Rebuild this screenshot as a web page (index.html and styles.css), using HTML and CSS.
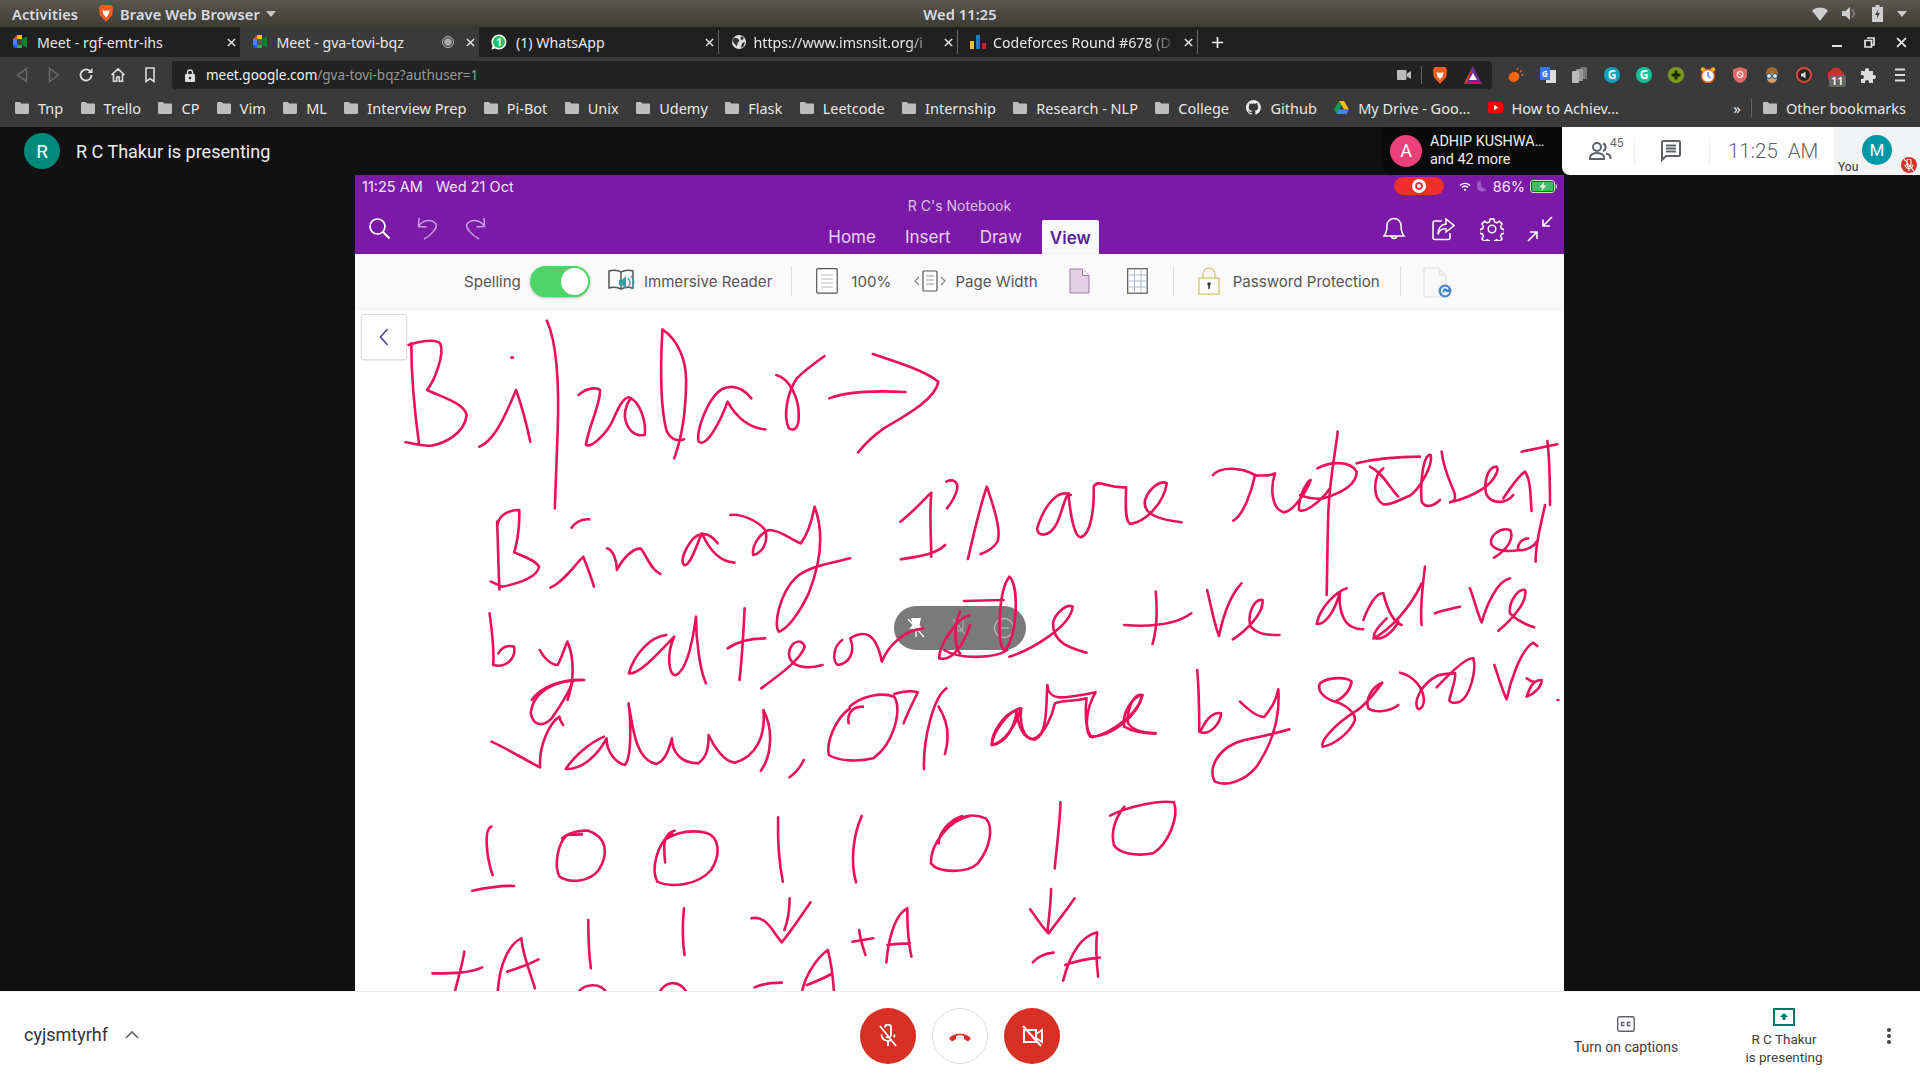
FILE: index.html
```html
<!DOCTYPE html>
<html lang="en">
<head>
<meta charset="utf-8">
<title>Meet - gva-tovi-bqz</title>
<link rel="stylesheet" href="styles.css">
</head>
<body>
<svg class="defs" width="0" height="0" aria-hidden="true">
  <symbol id="folder" viewBox="0 0 14 12"><path d="M0 1.2C0 .5.5 0 1.2 0h3.600l1.500 1.600h6.500c.7 0 1.200.5 1.200 1.200v8c0 .7-.5 1.200-1.200 1.200H1.200C.5 12 0 11.500 0 10.800z" fill="#bdbdbd"/></symbol>
  <symbol id="meet" viewBox="0 0 16 16"><path d="M1 5l4-4h5v4H5v1z" fill="#ea4335"/><path d="M1 5h4v6H1z" fill="#4285f4"/><path d="M1 11h4v3H3a2 2 0 0 1-2-2z" fill="#1967d2"/><path d="M5 11h5v3H5z" fill="#34a853"/><path d="M5 1h5v4H5z" fill="#fbbc04"/><path d="M10 5v6l5 3V2z" fill="#00832d"/><path d="M5 5h5v6H5z" fill="#fff" opacity=".15"/></symbol>
  <symbol id="x" viewBox="0 0 10 10"><path d="M1 1l8 8M9 1l-8 8" stroke="#e6e6e6" stroke-width="1.600" fill="none"/></symbol>
</svg>

<header class="panel">
  <div class="panel-left">
    <span>Activities</span>
    <span class="app">
      <svg width="16" height="19" viewBox="0 0 16 19"><path d="M3 1h10l2 2.500-.6 7.500-6.400 7-6.400-7L1 3.500z" fill="#f15a22"/><path d="M4.500 6l2 1 1.500-.6L9.500 7l2-1-.8 4L8 13.500 5.300 10z" fill="#fff"/></svg>
      Brave Web Browser
      <i class="caret"></i>
    </span>
  </div>
  <div class="panel-clock">Wed 11:25</div>
  <div class="panel-right">
    <svg width="16" height="14" viewBox="0 0 16 14"><path d="M0 3.500C4.500-.6 11.500-.6 16 3.500L8 14z" fill="#cfcfcf"/></svg>
    <svg width="16" height="15" viewBox="0 0 16 15"><path d="M0 5h3.500L8 1v13L3.500 10H0z" fill="#cfcfcf"/><path d="M10 3.500a5 5 0 0 1 0 8" stroke="#888" stroke-width="1.500" fill="none"/></svg>
    <svg width="11" height="17" viewBox="0 0 11 17"><path d="M3.500 0h4v2H11v15H0V2h3.500z" fill="#cfcfcf"/><path d="M6.500 4L3 10h2.500L4.500 14 8 8H5.500z" fill="#3c3a35"/></svg>
    <i class="caret"></i>
  </div>
</header>

<nav class="tabs">
  <div class="tab"><svg class="fav"><use href="#meet"/></svg><span class="tab-title">Meet - rgf-emtr-ihs</span><svg class="tab-x"><use href="#x"/></svg></div>
  <div class="tab active"><svg class="fav"><use href="#meet"/></svg><span class="tab-title">Meet - gva-tovi-bqz</span>
    <svg class="rec" viewBox="0 0 12 12"><circle cx="6" cy="6" r="5.500" fill="none" stroke="#bbb"/><circle cx="6" cy="6" r="3.800" fill="#aaa"/></svg>
    <svg class="tab-x"><use href="#x"/></svg></div>
  <div class="tab sep"><svg class="fav" viewBox="0 0 16 16"><path d="M8 .5a7.500 7.500 0 0 1 0 15c-1.300 0-2.600-.3-3.700-1L.5 15.500l1-3.700A7.500 7.500 0 0 1 8 .5z" fill="#fff"/><circle cx="8" cy="8" r="6" fill="#1fc25b"/><text x="8" y="11.500" class="wa">1</text></svg><span class="tab-title">(1) WhatsApp</span><svg class="tab-x"><use href="#x"/></svg></div>
  <div class="tab sep"><svg class="fav tight" viewBox="0 0 16 16"><circle cx="8" cy="8" r="7" fill="#e0e0e0"/><path d="M3 3.500l4 1 1.500 2.500-2 2-.5 3.500L3.500 10 1.500 7zM10 2l3 2-2 2.500-1.500-1.500zM11 9l3-1-1.500 4.500L10 14z" fill="#333"/></svg><span class="tab-title fade">https://www.imsnsit.org/i</span><svg class="tab-x"><use href="#x"/></svg></div>
  <div class="tab sep"><svg class="fav tight" viewBox="0 0 16 16"><rect x="0" y="7" width="4" height="8" fill="#f6c02c"/><rect x="6" y="1" width="4" height="14" fill="#1a7cc1"/><rect x="12" y="9" width="4" height="6" fill="#c0232c"/></svg><span class="tab-title fade">Codeforces Round #678 (D</span><svg class="tab-x"><use href="#x"/></svg></div>
  <svg class="newtab" viewBox="0 0 14 14"><path d="M7 1v12M1 7h12" stroke="#eee" stroke-width="1.800"/></svg>
  <div class="win">
    <svg width="11" height="11" viewBox="0 0 11 11"><path d="M0 9h10" stroke="#e6e6e6" stroke-width="2"/></svg>
    <svg width="11" height="11" viewBox="0 0 11 11"><path d="M3 1h7v7H8M1 3.500h6.500V10H1z" fill="none" stroke="#e6e6e6" stroke-width="1.700"/></svg>
    <svg width="11" height="11"><use href="#x"/></svg>
  </div>
</nav>

<div class="toolbar">
  <div class="nav-btns">
    <svg viewBox="0 0 16 16"><path d="M12.500 1.500v13L3.500 8z" fill="none" stroke="#6b6b6b" stroke-width="1.500"/></svg>
    <svg viewBox="0 0 16 16"><path d="M3.500 1.500v13l9-6.500z" fill="none" stroke="#6b6b6b" stroke-width="1.500"/></svg>
    <svg viewBox="0 0 16 16"><path d="M13.500 8a5.500 5.500 0 1 1-1.700-4" fill="none" stroke="#ddd" stroke-width="1.800"/><path d="M14.500 1v5h-5z" fill="#ddd"/></svg>
    <svg viewBox="0 0 16 16"><path d="M1.500 8L8 1.800 14.500 8M3.500 7v7.200h3.200V10h2.600v4.200h3.200V7" fill="none" stroke="#ddd" stroke-width="1.600"/></svg>
    <svg viewBox="0 0 16 16"><path d="M4 1h8v13.500l-4-2.800-4 2.800z" fill="none" stroke="#ddd" stroke-width="1.600"/></svg>
  </div>
  <div class="omnibox">
    <svg width="10" height="13" viewBox="0 0 10 13"><path d="M2.500 5V3.500a2.500 2.500 0 0 1 5 0V5" fill="none" stroke="#ddd" stroke-width="1.300"/><rect y="5" width="10" height="8" rx="1" fill="#ddd"/><circle cx="5" cy="9" r="1.200" fill="#222"/></svg>
    <span class="url"><b>meet.google.com</b>/gva-tovi-bqz?authuser=1</span>
    <svg class="cam" width="14" height="10" viewBox="0 0 14 10"><rect width="9.500" height="10" rx="1" fill="#bbb"/><path d="M10 3.500L14 1v8l-4-2.500z" fill="#bbb"/></svg>
    <i class="omni-sep"></i>
    <svg width="16" height="19" viewBox="0 0 16 19"><path d="M3 1h10l2 2.500-.6 7.500-6.400 7-6.400-7L1 3.500z" fill="#f15a22"/><path d="M4.500 6l2 1 1.500-.6L9.500 7l2-1-.8 4L8 13.500 5.300 10z" fill="#fff"/></svg>
    <svg class="bat-tri" width="18" height="18" viewBox="0 0 18 18"><path d="M9 0l9 18H0z" fill="#662d91"/><path d="M9 0L0 18l3-2z" fill="#ff5000"/><path d="M18 18H0l3-2h12z" fill="#e0115f"/><path d="M9 7l4 7H5z" fill="#fff"/></svg>
  </div>
  <div class="exts">
    <svg viewBox="0 0 16 16"><ellipse cx="6" cy="10" rx="5.500" ry="5" fill="#f0640a" transform="rotate(-30 6 10)"/><path d="M9 3l1-2M12 5l2-2M13 8h2.500" stroke="#f0640a" stroke-width="1.400"/></svg>
    <svg viewBox="0 0 16 16"><rect x="6" y="3" width="10" height="13" fill="#ddd"/><rect width="10" height="13" fill="#3b78e7"/><text x="5" y="10" class="ex">G</text></svg>
    <svg viewBox="0 0 16 16"><rect x="8" y="0" width="7" height="12" rx="1" fill="#777"/><rect x="4" y="2" width="7" height="12" rx="1" fill="#999"/><rect x="0" y="4" width="7" height="12" rx="1" fill="#bbb"/></svg>
    <svg viewBox="0 0 16 16"><circle cx="8" cy="8" r="8" fill="#11a3b8"/><text x="8" y="12" class="exl">G</text></svg>
    <svg viewBox="0 0 16 16"><circle cx="8" cy="8" r="8" fill="#15c39a"/><text x="8" y="12" class="exl">G</text></svg>
    <svg viewBox="0 0 16 16"><circle cx="8" cy="8" r="8" fill="#7a9a20"/><path d="M8 3.500v9M3.500 8h9" stroke="#1f2a0a" stroke-width="3"/></svg>
    <svg viewBox="0 0 16 16"><circle cx="8" cy="9" r="6.500" fill="#fff" stroke="#ef5a28" stroke-width="1.500"/><path d="M8 5v4l2.500 2" stroke="#3b78e7" stroke-width="1.300" fill="none"/><circle cx="3" cy="2.500" r="2.200" fill="#f6b01a"/><circle cx="13" cy="2.500" r="2.200" fill="#f6b01a"/></svg>
    <svg viewBox="0 0 16 16"><path d="M8 0l7 2.500V8c0 4-3.500 7-7 8-3.500-1-7-4-7-8V2.500z" fill="#e46a6a"/><circle cx="8" cy="7.500" r="3" fill="none" stroke="#fff"/><path d="M6 5.500l4 4" stroke="#fff"/></svg>
    <svg viewBox="0 0 16 16"><circle cx="8" cy="6" r="6" fill="#a06a35"/><circle cx="8" cy="11" r="5" fill="#d9a066"/><circle cx="5" cy="9" r="2.500" fill="#cfe8ff" stroke="#246" /><circle cx="11" cy="9" r="2.500" fill="#cfe8ff" stroke="#246"/></svg>
    <svg viewBox="0 0 16 16"><circle cx="8" cy="8" r="7" fill="#222" stroke="#d9473b" stroke-width="2"/><path d="M5 6.500h2L9.500 4.500v7L7 9.500H5z" fill="#ddd"/></svg>
    <span class="abp"><svg viewBox="0 0 16 16"><path d="M5 0h6l5 5v6l-5 5H5l-5-5V5z" fill="#c9302c"/></svg><b>11</b></span>
    <svg viewBox="0 0 16 16"><path d="M1 4h4V3a2 2 0 0 1 4 0v1h4v4h1a2 2 0 0 1 0 4h-1v4H9v-1a2 2 0 0 0-4 0v1H1v-4h1a2 2 0 0 0 0-4H1z" fill="#ddd"/></svg>
    <svg viewBox="0 0 16 16"><path d="M3 2.500h10M3 8h10M3 13.500h10" stroke="#ddd" stroke-width="2"/></svg>
  </div>
</div>

<div class="bookmarks">
  <a><svg class="bf"><use href="#folder"/></svg>Tnp</a>
  <a><svg class="bf"><use href="#folder"/></svg>Trello</a>
  <a><svg class="bf"><use href="#folder"/></svg>CP</a>
  <a><svg class="bf"><use href="#folder"/></svg>Vim</a>
  <a><svg class="bf"><use href="#folder"/></svg>ML</a>
  <a><svg class="bf"><use href="#folder"/></svg>Interview Prep</a>
  <a><svg class="bf"><use href="#folder"/></svg>Pi-Bot</a>
  <a><svg class="bf"><use href="#folder"/></svg>Unix</a>
  <a><svg class="bf"><use href="#folder"/></svg>Udemy</a>
  <a><svg class="bf"><use href="#folder"/></svg>Flask</a>
  <a><svg class="bf"><use href="#folder"/></svg>Leetcode</a>
  <a><svg class="bf"><use href="#folder"/></svg>Internship</a>
  <a><svg class="bf"><use href="#folder"/></svg>Research - NLP</a>
  <a><svg class="bf"><use href="#folder"/></svg>College</a>
  <a><svg class="bi" viewBox="0 0 16 16"><path d="M8 0a8 8 0 0 0-2.500 15.600c.4.100.5-.2.500-.4v-1.400c-2.200.5-2.700-1-2.700-1-.4-.9-.9-1.200-.9-1.200-.7-.5.100-.5.100-.5.800.1 1.200.8 1.200.8.700 1.200 1.900.9 2.300.7.100-.5.300-.9.500-1.100-1.800-.2-3.600-.9-3.600-4 0-.9.300-1.600.8-2.100-.1-.2-.4-1 .1-2.100 0 0 .7-.2 2.200.8a7.600 7.600 0 0 1 4 0c1.500-1 2.200-.8 2.200-.8.400 1.100.2 1.900.1 2.100.5.600.8 1.300.8 2.100 0 3.100-1.900 3.700-3.700 3.900.3.300.6.800.6 1.500v2.200c0 .2.100.5.600.4A8 8 0 0 0 8 0z" fill="#eee"/></svg>Github</a>
  <a><svg class="bi" viewBox="0 0 16 14"><path d="M5.300 0h5.400L16 9h-5.300z" fill="#fbbc04"/><path d="M5.300 0L0 9l2.700 5 5.300-9z" fill="#0f9d58"/><path d="M2.700 14h10.600L16 9H5.300z" fill="#4285f4"/></svg>My Drive - Goo…</a>
  <a><svg class="bi" viewBox="0 0 16 14"><rect y="1" width="16" height="12" rx="3" fill="#f00"/><path d="M6.300 4.200v5.600L11 7z" fill="#fff"/></svg>How to Achiev…</a>
  <span class="bm-end">
    <span class="more">»</span><i class="bm-sep"></i>
    <a><svg class="bf"><use href="#folder"/></svg>Other bookmarks</a>
  </span>
</div>

<main class="meet">
  <div class="meet-top">
    <div class="presenter"><span class="avatar teal">R</span><span>R C Thakur is presenting</span></div>
    <div class="meet-right">
      <div class="chip"><span class="avatar pink">A</span><div class="chip-text"><div>ADHIP KUSHWA…</div><div>and 42 more</div></div></div>
      <div class="info">
        <div class="people"><svg width="24" height="20" viewBox="0 0 24 20"><circle cx="9" cy="6" r="4" fill="none" stroke="#5f6368" stroke-width="2"/><path d="M2 18v-1.500c0-3 4-4.500 7-4.500s7 1.500 7 4.500V18z" fill="none" stroke="#5f6368" stroke-width="2"/><path d="M15 2.500a4 4 0 0 1 0 7.500M18 12.500c2.500.7 4.500 2 4.500 4V18" fill="none" stroke="#5f6368" stroke-width="2"/></svg><sup>45</sup></div>
        <i class="info-sep"></i>
        <svg class="chat" width="20" height="22" viewBox="0 0 20 22"><path d="M2 1h16a1 1 0 0 1 1 1v13a1 1 0 0 1-1 1H5l-4 4V2a1 1 0 0 1 1-1z" fill="none" stroke="#5f6368" stroke-width="2"/><path d="M5 5.500h10M5 8.500h10M5 11.500h10" stroke="#5f6368" stroke-width="1.800"/></svg>
        <i class="info-sep"></i>
        <span class="clock">11:25 &nbsp;AM</span>
      </div>
      <div class="you">
        <span class="you-label">You</span>
        <span class="avatar cyan">M</span>
        <span class="mic-dot"><svg width="10" height="12" viewBox="0 0 10 12"><path d="M3 2a2 2 0 0 1 4 0v4a2 2 0 0 1-4 0zM1 5.500a4 4 0 0 0 8 0M5 9.500V12M0 0l10 12" fill="none" stroke="#fff" stroke-width="1.100"/></svg></span>
      </div>
    </div>
  </div>

  <div class="meet-mid">
    <section class="stage">
      <div class="purple">
        <div class="status">
          <div class="status-l"><span>11:25 AM</span><span>Wed 21 Oct</span></div>
          <div class="status-r">
            <span class="recpill"><span class="recdot"></span></span>
            <svg width="12" height="9" viewBox="0 0 12 9"><path d="M1 3.500a7 7 0 0 1 10 0M3 5.500a4.200 4.200 0 0 1 6 0" fill="none" stroke="#fff" stroke-width="1.300"/><circle cx="6" cy="7.800" r="1.100" fill="#fff"/></svg>
            <svg width="10" height="12" viewBox="0 0 10 12"><path d="M4 .5a5.500 5.500 0 1 0 5.500 8.500C6 9.500 3 6 4 .5z" fill="#9b5cc4"/></svg>
            <span>86%</span>
            <svg class="batt" width="28" height="13" viewBox="0 0 28 13"><rect x=".5" y=".5" width="24" height="12" rx="2.500" fill="none" stroke="#cfe3c6"/><rect x="2" y="2" width="21" height="9" rx="1" fill="#3bc45e"/><path d="M14 1.500L9.500 7.500h3L11 11.500 16.500 5.500h-3z" fill="#f4f4e0"/><rect x="25.500" y="4.500" width="1.500" height="4" fill="#cfb8dc"/></svg>
          </div>
        </div>
        <div class="ribbon">
          <div class="ribbon-l">
            <svg width="24" height="24" viewBox="0 0 24 24"><circle cx="10.500" cy="10.500" r="7.500" fill="none" stroke="#fff" stroke-width="1.700"/><path d="M16 16l6.500 6.500" stroke="#fff" stroke-width="1.900"/></svg>
            <svg width="24" height="24" viewBox="0 0 24 24"><path d="M3 2l-.5 8.500 8 .5M3 9.500C8 3 16 3 20 8c2 4-6 12-12 15" fill="none" stroke="#c9a3dd" stroke-width="1.500"/></svg>
            <svg class="redo" width="24" height="24" viewBox="0 0 24 24"><path d="M21 2l.5 8.500-8 .5M21 9.500C16 3 8 3 4 8c-2 4 6 12 12 15" fill="none" stroke="#c9a3dd" stroke-width="1.500"/></svg>
          </div>
          <div class="ribbon-c">
            <div class="nb-title">R C's Notebook</div>
            <div class="rtabs"><span>Home</span><span>Insert</span><span>Draw</span><span class="rtab-on">View</span></div>
          </div>
          <div class="ribbon-r">
            <svg width="24" height="24" viewBox="0 0 24 24"><path d="M12 1.500a7 7 0 0 1 7 7c0 6 1 8 3 10.500H2c2-2.500 3-4.500 3-10.500a7 7 0 0 1 7-7zM9.500 19a2.500 2.500 0 0 0 5 0" fill="none" stroke="#fff" stroke-width="1.500"/></svg>
            <svg width="24" height="24" viewBox="0 0 24 24"><path d="M19 16v4.500a2 2 0 0 1-2 2H4a2 2 0 0 1-2-2V6a2 2 0 0 1 2-2h7" fill="none" stroke="#fff" stroke-width="1.500"/><path d="M15 2l8 6.500-8 6.500v-3.500c-5 0-7 2-8 6 0-6 3-10 8-10.500z" fill="none" stroke="#fff" stroke-width="1.500"/></svg>
            <svg width="24" height="24" viewBox="0 0 24 24"><circle cx="12" cy="12" r="3.800" fill="none" stroke="#fff" stroke-width="1.500"/><path d="M10 1.500h4l.7 3 2.400 1 2.700-1.600 2.800 2.800-1.600 2.700 1 2.400 3 .7v4l-3 .7-1 2.400 1.600 2.700-2.800 2.800-2.700-1.600-2.400 1-.7 3h-4l-.7-3-2.400-1-2.700 1.600-2.800-2.800 1.600-2.700-1-2.400-3-.7v-4l3-.7 1-2.400-1.600-2.700 2.800-2.800 2.700 1.600 2.400-1z" transform="translate(.6 .6) scale(.95)" fill="none" stroke="#fff" stroke-width="1.600"/></svg>
            <svg class="collapse" width="26" height="26" viewBox="0 0 26 26"><path d="M25 1l-9 9M16 3.500V10h7M1 25l9-9M10 23v-7H3" fill="none" stroke="#fff" stroke-width="1.600"/></svg>
          </div>
        </div>
      </div>

      <div class="tools">
        <span class="t-label t-spell">Spelling</span>
        <span class="toggle"><span class="knob"></span></span>
        <svg class="t-reader" width="27" height="24" viewBox="0 0 27 24"><path d="M13 3C10 1 5 1 1 2v17c4-1 8-1 12 1 4-2 8-2 12-1V2c-4-1-8-1-12 1zM13 3v17" fill="none" stroke="#555" stroke-width="1.500"/><path d="M11 11h3l4-4v13l-4-4h-3z" fill="#2aa59d"/><path d="M20 9a6 6 0 0 1 0 9M23 7a9 9 0 0 1 0 13" fill="none" stroke="#2aa59d" stroke-width="1.400"/></svg>
        <span class="t-label t-imm">Immersive Reader</span>
        <i class="t-sep s1"></i>
        <svg class="t-page" width="22" height="26" viewBox="0 0 22 26"><rect x=".7" y=".7" width="20.500" height="24.500" rx="1" fill="#fff" stroke="#555" stroke-width="1.200"/><path d="M5 7h12M5 11h12M5 15h12M5 19h12" stroke="#bbb" stroke-width="1.200"/></svg>
        <span class="t-label t-100">100%</span>
        <span class="t-pw"><svg width="32" height="22" viewBox="0 0 32 22"><path d="M5 7l-4 4 4 4M27 7l4 4-4 4" fill="none" stroke="#888" stroke-width="1.200"/><rect x="9" y="1" width="14" height="20" rx="1" fill="#fff" stroke="#555" stroke-width="1.200"/><path d="M12 6h8M12 10h8M12 14h8" stroke="#999" stroke-width="1.200"/></svg></span>
        <span class="t-label t-pwl">Page Width</span>
        <svg class="t-pink" width="21" height="26" viewBox="0 0 21 26"><path d="M1 1h12.500L20 7.500V25H1z" fill="#e4cfe6" stroke="#9a7fa5" stroke-width="1"/><path d="M13.500 1v6.500H20" fill="#fff" stroke="#9a7fa5"/></svg>
        <svg class="t-grid" width="21" height="26" viewBox="0 0 21 26"><rect x=".7" y=".7" width="19.500" height="24.500" fill="#fff" stroke="#555" stroke-width="1.200"/><path d="M1 7h19M1 13h19M1 19h19M7.500 1v24M14 1v24" stroke="#a8b8d0" stroke-width="1"/></svg>
        <i class="t-sep s2"></i>
        <svg class="t-lock" width="22" height="28" viewBox="0 0 22 28"><path d="M5 11V7a6 6 0 0 1 12 0v4" fill="none" stroke="#d8cc7a" stroke-width="1.500"/><rect x="1" y="11" width="20" height="16" fill="#fff" stroke="#d8cc7a" stroke-width="1.500"/><circle cx="11" cy="17" r="1.800" fill="#333"/><path d="M11 18v4" stroke="#333" stroke-width="1.500"/></svg>
        <span class="t-label t-pass">Password Protection</span>
        <i class="t-sep s3"></i>
        <svg class="t-file" width="29" height="32" viewBox="0 0 29 32"><path d="M1 1h15l7 7v22H1z" fill="#fafafa" stroke="#ddd"/><path d="M16 1v7h7" fill="#eee" stroke="#ddd"/><circle cx="22" cy="24" r="6.500" fill="#4a86c5"/><path d="M25 22a3.500 3.500 0 1 0 0 4h-3v-2" fill="none" stroke="#fff" stroke-width="1.500"/></svg>
      </div>

      <div class="canvas">
        <button class="back" type="button" aria-label="Back"><svg width="10" height="18" viewBox="0 0 10 18"><path d="M8.500 1L1.500 9l7 8" fill="none" stroke="#4a3aa0" stroke-width="1.500"/></svg></button>

        <div class="pill">
          <svg width="20" height="22" viewBox="0 0 20 22"><path d="M5 1h10l-1.500 7 3 4H3.500l3-4z" fill="#fff"/><path d="M10 12v8M2 2l16 18" stroke="#fff" stroke-width="1.300"/></svg>
          <svg width="18" height="22" viewBox="0 0 18 22"><rect x="6" y="2" width="6" height="12" rx="3" fill="none" stroke="#a8a8a8" stroke-width="1.300"/><path d="M2 2l14 18" stroke="#a8a8a8" stroke-width="1.300"/></svg>
          <svg width="22" height="22" viewBox="0 0 22 22"><circle cx="11" cy="11" r="9.500" fill="none" stroke="#b4b4b4" stroke-width="1.300"/><path d="M6 11h10" stroke="#b4b4b4" stroke-width="1.300"/></svg>
        </div>

        <svg class="ink" viewBox="355 308 1209 684" preserveAspectRatio="none" role="img" aria-label="Handwritten notes on bipolar encoding">
          <g transform="translate(350 300) scale(.39541 .33333)">
            <path d="M148 135C170 125 215 115 228 130C240 160 215 240 195 270C230 290 290 310 295 345C290 400 240 430 205 437C185 440 160 430 140 427M155 130C155 220 165 350 175 435"/>
            <path d="M408 173h4M327 440C360 425 385 370 420 270C435 320 448 380 456 425"/>
            <path d="M498 62C520 120 530 240 525 400C523 480 520 560 518 625"/>
            <path d="M578 285C600 262 625 262 632 270C635 310 600 390 597 435C610 445 650 400 665 360C680 320 690 295 705 292C735 305 750 370 745 405C720 410 700 390 695 350C695 320 705 300 712 295"/>
            <path d="M790 90C785 200 785 320 800 390C810 420 830 425 845 418M790 88C830 120 850 180 850 240C850 330 840 410 820 475"/>
            <path d="M1015 295C985 250 945 250 920 290C895 330 875 400 882 425C900 445 935 370 955 305C975 350 1010 385 1050 388"/>
            <path d="M1078 225C1110 235 1135 290 1135 345C1135 385 1125 395 1110 385C1095 350 1105 280 1130 235C1150 210 1180 185 1200 168"/>
            <path d="M1212 295C1260 272 1340 272 1405 276M1322 162C1380 185 1450 210 1488 245C1480 300 1400 350 1350 385C1320 410 1300 435 1285 457"/>
            <path d="M372 680C375 650 395 630 428 630C430 690 420 740 415 757C440 770 470 780 478 800C475 830 430 850 385 860L356 845M372 665C375 740 375 810 378 868"/>
            <path d="M560 683C575 660 590 657 605 658M507 863C540 845 565 800 590 770C600 800 610 830 617 860"/>
            <path d="M650 745C665 750 675 780 675 810C690 775 715 745 735 745C750 765 760 810 785 822"/>
            <path d="M930 730C905 690 880 700 865 720C845 750 835 785 845 795C860 800 875 740 890 700C905 740 930 785 972 788"/>
            <path d="M962 645C985 640 1030 660 1050 690C1060 730 1040 760 1020 765C1015 740 1035 700 1060 690C1090 690 1115 720 1140 730C1160 700 1170 650 1175 620C1200 700 1190 790 1160 880C1140 930 1110 985 1085 995C1070 980 1085 880 1130 830C1160 800 1210 790 1265 775"/>
            <path d="M1392 665C1420 640 1450 600 1470 578C1465 650 1470 720 1470 770M1393 778C1430 770 1480 765 1505 735M1508 545C1525 535 1540 545 1535 570C1530 590 1520 610 1510 625"/>
            <path d="M353 940C360 1000 365 1060 362 1095C395 1105 420 1075 415 1040C400 1035 385 1040 375 1060"/>
            <path d="M480 1050C490 1075 510 1095 525 1095C535 1075 540 1050 550 1025C570 1080 565 1150 550 1200M592 1140C540 1135 480 1160 460 1200"/>
            <path d="M800 1005C760 1010 720 1060 705 1120C730 1125 780 1060 820 1010C800 1060 805 1130 825 1125C850 1110 865 1040 875 950C875 1020 885 1110 900 1150"/>
            <path d="M998 925C995 1000 990 1090 985 1140M955 1045C985 1020 1020 1015 1050 1015"/>
            <path d="M1040 1165C1080 1130 1140 1080 1150 1040C1145 1015 1115 1020 1110 1060C1110 1100 1150 1110 1195 1095"/>
            <path d="M1245 1020C1220 1040 1220 1090 1235 1095C1260 1090 1280 1060 1265 1015C1300 990 1330 995 1345 1085C1360 1040 1400 990 1450 985"/>
            <path d="M1568 945C1530 955 1490 1040 1490 1075C1520 1085 1550 1040 1568 975"/>
          </g>
          <g transform="translate(960 400) scale(.39541 .33333)">
            <path d="M20 477C35 400 55 300 68 260C85 320 105 390 95 425C85 445 70 455 52 462"/>
            <path d="M280 285C250 265 215 310 195 385C195 410 225 415 245 370C260 330 265 290 275 280M275 290C280 350 290 410 305 412C330 405 340 330 338 260C350 235 370 265 420 262C420 300 415 360 430 372C470 365 515 310 523 250C510 240 480 260 468 300C460 345 510 360 560 367"/>
            <path d="M10 603L110 600M125 530C150 560 145 700 115 750M125 530C105 560 100 620 100 690C100 720 105 750 115 752M-40 750C0 780 90 775 120 750M0 635C-20 690 -10 750 0 760"/>
            <path d="M125 770C180 750 280 680 285 620C270 610 240 640 235 670C235 730 280 745 320 758"/>
            <path d="M415 675C470 680 540 680 585 640M495 575C500 640 495 700 487 732M625 570C635 620 645 680 655 708C665 650 680 590 712 550M690 718C720 695 770 640 765 600C745 595 725 640 735 680C755 705 780 705 808 705"/>
            <path d="M150 925C120 940 85 990 80 1035C110 1030 140 980 155 925C150 970 160 1015 185 1018C215 1005 235 940 240 910C260 900 290 905 320 895C315 950 320 1000 335 1012C380 1000 455 940 460 885C440 880 420 930 425 970C440 995 470 1000 495 1000"/>
            <path d="M600 810C605 880 605 950 605 995C630 1010 660 970 660 940C645 935 625 950 610 990"/>
            <path d="M708 905C730 930 755 955 770 950C790 920 800 900 805 868C810 950 790 1030 750 1100C720 1145 670 1160 645 1145C625 1110 650 1040 720 1020C760 1010 800 1000 833 988"/>
          </g>
          <g transform="translate(1220 425) scale(.33333)">
            <path d="M-21 150C0 125 60 125 105 150C95 200 70 270 40 287M105 152C125 150 150 155 165 145C150 190 155 250 190 262C215 262 255 210 272 165C260 170 235 215 237 255C250 265 300 235 330 190"/>
            <path d="M292 130C330 110 390 105 410 140C410 180 360 205 310 220C280 225 255 215 240 210"/>
            <path d="M353 20C350 60 330 150 325 260C322 350 322 430 320 510"/>
            <path d="M410 115C450 105 520 95 600 95M450 125C490 145 510 190 535 215M490 130C460 150 455 220 490 238C520 240 545 220 570 212C600 190 640 120 632 90C610 85 600 170 605 230C615 250 640 245 660 225"/>
            <path d="M665 80C670 130 690 170 700 195C710 220 705 228 690 232C720 225 760 210 790 190C820 170 840 135 830 125C800 125 790 180 800 210C815 235 855 240 880 210"/>
            <path d="M850 220C870 190 900 150 915 140C935 170 930 220 935 258M905 80L1012 58M982 48C990 110 990 190 990 240"/>
            <path d="M975 240C965 290 945 360 947 410M822 398C860 375 885 340 870 315C840 305 805 335 815 360C830 380 870 380 900 375M925 340C905 340 890 360 895 375C920 380 945 360 950 350"/>
            <path d="M380 490C350 500 300 545 290 597C315 600 345 560 360 500C355 540 365 590 395 605C410 612 420 615 430 612M430 585C445 545 470 500 490 505C500 545 515 590 545 600"/>
            <path d="M615 425C608 480 600 560 605 600M460 640C510 615 570 550 605 475M500 580C470 610 455 630 465 640C490 645 520 620 535 590"/>
            <path d="M645 565C670 555 700 550 720 545M750 490C765 530 775 575 785 592C800 540 830 470 870 460M835 617C870 590 925 530 915 495C895 490 865 530 870 565C890 585 920 600 942 607"/>
          </g>
          <g transform="translate(1300 640) scale(.33333)">
            <path d="M105 185C70 175 50 150 60 130C85 110 140 110 155 125C150 155 125 175 105 185C130 190 165 215 165 240C150 280 100 315 68 320C60 300 110 250 165 215C200 195 230 150 247 128C215 140 195 180 205 205C225 220 270 215 295 195"/>
            <path d="M300 98C335 105 370 140 372 180C370 205 355 215 350 200C345 170 370 130 410 108C430 100 445 100 465 100"/>
            <path d="M410 142C440 110 500 50 520 55C530 90 510 170 480 185C465 190 450 190 448 180C455 150 470 110 465 100"/>
            <path d="M583 75C595 110 610 160 620 178C630 130 660 30 700 8L712 18"/>
            <path d="M680 170C690 140 700 120 725 120C725 140 705 160 680 170M680 115C695 125 700 125 700 125M773 180h2"/>
          </g>
          <g transform="translate(400 680) scale(.52296 .33333)">
            <path d="M350 0C300 0 255 30 250 100C255 140 275 140 290 115C310 70 325 30 330 5M175 185C210 210 245 245 268 262C265 200 285 130 305 110C305 115 310 130 312 135"/>
            <path d="M390 170C360 190 330 235 317 267C350 270 380 220 395 175C395 220 415 250 430 255C445 230 440 100 437 70C445 140 450 240 490 252C510 240 515 200 520 175C520 220 540 250 570 250C590 230 590 190 590 165C600 200 620 245 640 248C680 230 700 170 695 90C715 150 710 230 690 272"/>
            <path d="M772 240C765 265 755 280 745 292"/>
            <path d="M885 80C860 80 855 110 858 130M860 85C830 120 815 190 820 225C840 245 880 245 905 235C945 190 960 90 945 50C920 35 880 50 860 80M945 42C960 35 975 30 990 37C980 70 970 100 963 130"/>
            <path d="M1045 25C1020 50 1000 180 1002 267M1030 80C1050 130 1050 180 1042 222"/>
            <path d="M1180 90C1155 100 1130 160 1132 195C1160 190 1175 140 1180 90C1180 130 1190 180 1215 178C1240 160 1235 60 1238 15C1240 60 1260 60 1330 37C1310 90 1310 150 1320 170C1360 170 1410 110 1420 45C1400 50 1380 100 1385 140C1400 155 1420 160 1445 160"/>
            <path d="M175 440C160 445 165 530 177 585M138 632C160 625 190 615 218 618"/>
            <path d="M348 463L320 465C300 490 295 560 305 590C330 615 365 600 380 570C400 520 395 470 360 452C340 450 320 460 310 475"/>
            <path d="M525 452C500 460 505 510 507 547M520 460C490 490 480 570 492 605C520 625 570 615 595 570C615 520 610 470 585 458C560 450 530 455 505 480"/>
            <path d="M723 412C722 480 725 550 732 605M883 408C868 460 860 540 872 607"/>
            <path d="M1075 408C1050 420 1030 460 1030 490M1090 408C1050 420 1015 490 1015 550C1030 580 1085 580 1105 550C1130 500 1135 440 1120 415C1105 405 1090 405 1080 410"/>
            <path d="M1263 367C1262 430 1255 510 1252 565"/>
            <path d="M1358 407C1390 380 1450 360 1480 367C1490 410 1470 490 1440 520C1405 530 1375 520 1365 495C1360 460 1365 420 1385 380"/>
            <path d="M360 720C360 770 362 830 365 865M543 685C540 730 540 780 544 825"/>
            <path d="M672 715C700 705 710 750 730 787C750 750 770 700 785 667M745 655C745 690 740 730 735 750"/>
            <path d="M865 785L905 775M878 750C880 780 885 800 890 825M970 685C950 700 935 760 930 847M970 685C970 740 972 790 978 830M932 795C950 790 965 790 975 790"/>
            <path d="M1245 627C1245 670 1240 720 1238 757M1205 688C1220 720 1230 745 1240 760C1260 720 1275 690 1290 655"/>
            <path d="M1210 847C1220 830 1235 820 1250 818M1333 757C1300 770 1280 830 1268 902M1333 757C1330 800 1332 850 1335 890M1272 855C1290 845 1320 835 1338 833"/>
            <path d="M62 880C90 880 130 882 157 862M123 815C120 850 110 900 105 935M232 775C210 790 190 850 187 935M232 775C235 830 250 880 258 925M205 875C225 865 250 850 265 838"/>
            <path d="M340 940C350 910 385 905 395 940M495 940C505 910 530 890 550 940M678 922C695 910 715 908 730 908M818 810C800 830 775 880 768 940M818 810C825 850 828 890 830 940M778 915C795 905 810 895 825 882"/>
          </g>
        </svg>
      </div>
    </section>
  </div>

  <footer class="bottom">
    <div class="b-left"><span class="b-code">cyjsmtyrhf</span><svg width="14" height="8" viewBox="0 0 14 8"><path d="M1 7l6-6 6 6" fill="none" stroke="#5f6368" stroke-width="1.600"/></svg></div>
    <div class="b-center">
      <span class="round red"><svg width="24" height="24" viewBox="0 0 24 24"><path d="M9 3.500a3 3 0 0 1 6 0v7a3 3 0 0 1-5 2.200M5.500 10.500a6.500 6.500 0 0 0 10.500 5M18.500 10.500c0 1-.2 2-.6 2.800M12 17v5M4 2l16 20" fill="none" stroke="#fff" stroke-width="1.800"/></svg></span>
      <span class="round plain"><svg width="24" height="12" viewBox="0 0 24 12"><path d="M1 8.500C5 2 19 2 23 8.500L20 11.500l-4-2.500V6c-2.500-1-5.500-1-8 0v3l-4 2.500z" fill="#d93025"/></svg></span>
      <span class="round red"><svg width="24" height="24" viewBox="0 0 24 24"><path d="M4 6h12v12H4zM16 10l6-4v12l-6-4" fill="none" stroke="#fff" stroke-width="2"/><path d="M3 2l18 20" stroke="#fff" stroke-width="2"/></svg></span>
    </div>
    <div class="b-right">
      <div class="act cap"><svg width="18" height="16" viewBox="0 0 18 16"><rect x=".8" y=".8" width="16.400" height="14.400" rx="1.500" fill="none" stroke="#5f6368" stroke-width="1.400"/><path d="M7.500 6.500h-3v3h3M13.500 6.500h-3v3h3" fill="none" stroke="#5f6368" stroke-width="1.400"/></svg><span>Turn on captions</span></div>
      <div class="act pres"><svg width="22" height="18" viewBox="0 0 22 18"><rect x="1" y="1" width="20" height="16" fill="none" stroke="#00796b" stroke-width="2"/><path d="M11 5l-4 4h2.500v3h3V9H15z" fill="#00796b"/></svg><span>R C Thakur<br>is presenting</span></div>
      <svg class="dots" width="6" height="18" viewBox="0 0 6 18"><circle cx="3" cy="3" r="2" fill="#444"/><circle cx="3" cy="9" r="2" fill="#444"/><circle cx="3" cy="15" r="2" fill="#444"/></svg>
    </div>
  </footer>
</main>
</body>
</html>
```
FILE: styles.css
```css
* { box-sizing: border-box; }
html, body { margin: 0; height: 100%; }
body {
  width: 1920px; height: 1080px; overflow: hidden;
  display: flex; flex-direction: column;
  font-family: "Noto Sans", sans-serif; background: #111;
}
.defs { position: absolute; }
a { display: flex; align-items: center; }

/* GNOME panel */
.panel {
  height: 27px; flex: none; display: grid; grid-template-columns: 1fr auto 1fr; align-items: center;
  background: linear-gradient(#5a5750, #3d3b36);
  color: #d8dce2; font-size: 14.6px; font-weight: 600; padding: 0 12px; letter-spacing: .1px;
}
.panel-left { display: flex; gap: 20px; align-items: center; }
.app { display: flex; align-items: center; gap: 6px; }
.caret { width: 0; height: 0; border: 5px solid transparent; border-top: 6px solid #c9c9c9; border-bottom: 0; display: inline-block; }
.panel-right { display: flex; justify-content: flex-end; align-items: center; gap: 14px; padding-right: 1px; }

/* tabs */
.tabs { height: 30px; flex: none; background: #202020; display: flex; align-items: stretch; position: relative; }
.tab { width: 239.5px; display: flex; align-items: center; padding: 0 4px 0 12px; color: #e8e8e8; font-size: 14.2px; flex: none; }
.tab.active { background: #3a3a3a; }
.tab.sep { border-right: 1px solid #666; margin: 3px 0; height: 24px; }
.fav { width: 16px; height: 16px; flex: none; margin-right: 9px; }
.fav.tight { margin-right: 7px; }
.tab-title { flex: 1; white-space: nowrap; overflow: hidden; }
.fade { -webkit-mask-image: linear-gradient(90deg, #000 85%, transparent); mask-image: linear-gradient(90deg, #000 85%, transparent); }
.tab-x { width: 9px; height: 9px; flex: none; margin-left: 8px; }
.rec { width: 12px; height: 12px; margin-right: 4px; flex: none; }
.wa { font: 700 10px "Noto Sans", sans-serif; fill: #fff; text-anchor: middle; }
.newtab { width: 13px; height: 13px; margin: 9px 0 0 13px; }
.win { margin-left: auto; display: flex; gap: 21px; align-items: center; padding-right: 13px; }

/* toolbar */
.toolbar { height: 32px; flex: none; background: #3a3a3a; display: flex; align-items: flex-end; }
.nav-btns { width: 172px; height: 28px; display: flex; align-items: center; padding-left: 14px; gap: 16px; }
.nav-btns svg { width: 16px; height: 16px; flex: none; }
.omnibox { width: 1320px; height: 28px; background: #222; border-radius: 0 4px 4px 4px; display: flex; align-items: center; padding: 0 10px 0 13px; gap: 13px; color: #999; font-size: 13.5px; }
.url { flex: 1; margin-left: -2px; }
.url b { color: #f1f1f1; font-weight: 400; }
.omni-sep { width: 1px; height: 18px; background: #666; margin: 0 -3px; }
.bat-tri { margin-left: 3px; }
.exts { flex: 1; height: 28px; display: flex; align-items: center; padding-left: 16px; gap: 16px; }
.exts svg { width: 16px; height: 16px; flex: none; }
.ex { font: 700 8px "Noto Sans", sans-serif; fill: #fff; text-anchor: middle; }
.exl { font: 700 12px "Noto Sans", sans-serif; fill: #fff; text-anchor: middle; }
.abp { position: relative; width: 16px; height: 16px; }
.abp b { position: absolute; left: 1px; top: 8px; background: #666; color: #fff; font-size: 11px; line-height: 12px; padding: 0 2px; border-radius: 2px; font-weight: 600; }

/* bookmarks */
.bookmarks { height: 38px; flex: none; background: #3a3a3a; display: flex; align-items: center; padding: 0 14px 1px 15px; gap: 17.4px; color: #e8e8e8; font-size: 14.5px; white-space: nowrap; }
.bookmarks a { gap: 9px; }
.bf { width: 14px; height: 12px; flex: none; }
.bi { width: 15px; height: 15px; flex: none; }
.bm-end { margin-left: auto; display: flex; align-items: center; }
.more { font-size: 15px; margin-right: 10px; }
.bm-sep { width: 1px; height: 18px; background: #666; margin-right: 11px; }

/* meet */
.meet { flex: 1; min-height: 0; display: flex; flex-direction: column; background: #111; font-family: Roboto, sans-serif; }
.meet-top { height: 48px; flex: none; display: flex; justify-content: space-between; }
.presenter { display: flex; align-items: center; gap: 16px; padding: 0 0 0 24px; color: #eee; font-size: 18px; }
.avatar { width: 36px; height: 36px; border-radius: 50%; display: flex; align-items: center; justify-content: center; color: #fff; flex: none; font-size: 19px; }
.teal { background: #00897b; }
.pink { background: #ec407a; width: 32px; height: 32px; font-size: 18px; }
.cyan { background: #0097a7; width: 30px; height: 30px; font-size: 17px; }
.meet-right { display: flex; }
.chip { width: 180px; background: #0a0a0a; border-radius: 0 0 0 10px; display: flex; align-items: center; gap: 8px; padding: 0 0 0 8px; color: #eee; font-size: 14.4px; line-height: 18px; }
.info { width: 272px; background: #fff; border-radius: 0 0 0 8px; display: flex; align-items: center; padding-left: 26px; color: #5f6368; }
.people { display: flex; width: 46px; }
.people sup { font-size: 12px; line-height: 10px; margin: -3px 0 0 -2px; }
.info-sep { width: 1px; height: 26px; background: #eee; }
.chat { margin: 0 28px 0 26px; }
.clock { font-size: 20.5px; font-weight: 300; margin-left: 18px; white-space: nowrap; }
.you { width: 86px; background: #f1f3f4; position: relative; display: flex; align-items: center; justify-content: center; }
.you .avatar { margin: -2px 0 0 0; }
.you-label { position: absolute; left: 4px; bottom: 1px; font-size: 12px; color: #333; }
.mic-dot { position: absolute; right: 3px; bottom: 2px; width: 16px; height: 16px; border-radius: 50%; background: #d93025; display: flex; align-items: center; justify-content: center; }

.meet-mid { flex: 1; min-height: 0; display: flex; justify-content: center; }
.stage { width: 1209px; margin-left: -1px; display: flex; flex-direction: column; background: #fff; font-family: Inter, sans-serif; overflow: hidden; }
.purple { height: 79px; flex: none; background: #7a1aa6; color: #fff; }
.status { height: 22px; display: flex; justify-content: space-between; align-items: center; padding: 0 6px 0 7px; font-size: 14.5px; color: #f2e6f7; }
.status-l { display: flex; gap: 13px; }
.status-r { display: flex; align-items: center; gap: 6px; }
.recpill { width: 50px; height: 18px; border-radius: 9px; background: #ee2f2c; display: flex; align-items: center; justify-content: center; margin-right: 9px; }
.recdot { width: 14px; height: 14px; border-radius: 50%; background: #fff; border: 3.500px solid #fff; box-shadow: inset 0 0 0 2px #ee2f2c; }
.batt { margin-left: -1px; }
.ribbon { height: 57px; display: grid; grid-template-columns: 1fr auto 1fr; }
.ribbon-l { display: flex; gap: 25px; padding: 5px 0 0 12px; align-items: center; }
.redo { margin-left: -2px; }
.ribbon-r { display: flex; gap: 25px; padding: 7px 11px 0 0; justify-content: flex-end; align-items: center; }
.collapse { margin-left: -2px; }
.ribbon-c { padding-left: 8px; display: flex; flex-direction: column; align-items: center; }
.nb-title { font-size: 14px; line-height: 18px; color: #dcc2e8; margin: 0 0 5px -8px; }
.rtabs { display: flex; align-items: stretch; height: 34px; font-size: 17px; color: #e8d5f0; gap: 29px; }
.rtabs span { display: flex; align-items: center; padding-top: 0; }
.rtabs .rtab-on { background: #fbfafb; color: #5d1f96; font-weight: 600; padding: 2px 8px 0; border-radius: 2px 2px 0 0; margin-left: -9px; }

.tools { height: 54px; flex: none; background: #fbfafb; display: flex; align-items: center; box-shadow: 0 1px 4px rgba(0,0,0,.08); position: relative; z-index: 1; color: #555; font-size: 15.1px; white-space: nowrap; }
.t-label { display: block; }
.t-spell { margin-left: 109px; }
.toggle { width: 60px; height: 31px; border-radius: 16px; background: #4cd468; margin-left: 9px; padding: 2px; display: flex; justify-content: flex-end; box-shadow: 0 1px 3px rgba(0,0,0,.25); }
.knob { width: 27px; height: 27px; border-radius: 50%; background: #fff; }
.t-reader { margin-left: 18px; }
.t-imm { margin-left: 9px; }
.t-sep { width: 1px; height: 30px; background: #ddd; }
.s1 { margin-left: 19px; }
.t-page { margin-left: 24px; }
.t-100 { margin-left: 13px; }
.t-pw { margin-left: 23px; line-height: 0; }
.t-pwl { margin-left: 9px; }
.t-pink { margin-left: 31px; }
.t-grid { margin-left: 37px; }
.s2 { margin-left: 25px; }
.t-lock { margin-left: 24px; }
.t-pass { margin-left: 13px; }
.s3 { margin-left: 20px; }
.t-file { margin-left: 22px; margin-top: 4px; }

.canvas { flex: 1; min-height: 0; position: relative; background: #fff; }
.back { position: absolute; left: 6px; top: 6px; width: 46px; height: 46px; background: #fff; border: 1px solid #ddd; border-radius: 2px; box-shadow: 0 1px 2px rgba(0,0,0,.1); padding: 0; display: flex; align-items: center; justify-content: center; }
.ink { position: absolute; inset: 0; width: 100%; height: 100%; }
.ink path { fill: none; stroke: #e8115a; stroke-width: 2.6; stroke-linecap: round; stroke-linejoin: round; vector-effect: non-scaling-stroke; }
.pill { position: absolute; left: 539px; top: 298px; width: 132px; height: 44px; border-radius: 22px; background: rgb(122,122,122); display: flex; align-items: center; justify-content: space-between; padding: 0 11px 0 12px; }

/* bottom bar */
.bottom { height: 88px; flex: none; background: #fff; display: grid; grid-template-columns: 1fr auto 1fr; align-items: center; font-family: Roboto, sans-serif; box-shadow: 0 -1px 0 #eee; position: relative; z-index: 2; color: #3c4043; }
.b-left { display: flex; align-items: center; gap: 17px; padding: 0 0 3px 24px; font-size: 18px; color: #333; }
.b-center { display: flex; gap: 16px; }
.round { width: 56px; height: 56px; border-radius: 50%; display: flex; align-items: center; justify-content: center; }
.red { background: #d93025; }
.plain { border: 1px solid #dadce0; background: #fff; }
.b-right { display: flex; justify-content: flex-end; align-items: center; font-size: 13.5px; line-height: 18px; padding-right: 28px; text-align: center; }
.act { display: flex; flex-direction: column; align-items: center; gap: 6px; }
.cap { width: 120px; font-size: 14px; }
.pres { width: 120px; margin-left: 38px; gap: 4px; padding-top: 2px; }
.dots { margin-left: 42px; }
```
